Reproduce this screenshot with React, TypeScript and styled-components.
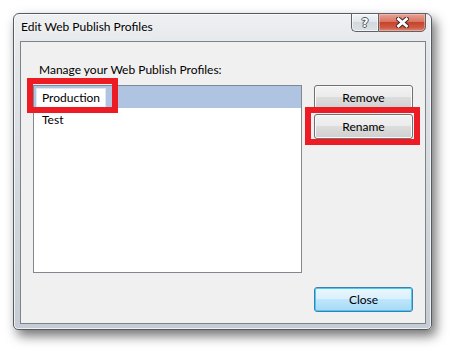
import React from "react";
import styled, { createGlobalStyle, css } from "styled-components";

const Global = createGlobalStyle`
  html, body { margin: 0; padding: 0; background: #ffffff; }
  body {
    font-family: Lato, "Noto Sans", sans-serif;
    font-size: 12px;
    color: #000;
  }
  * { box-sizing: border-box; }
`;

const Page = styled.div`
  position: relative;
  width: 450px;
  height: 351px;
  padding: 13px 0 0 13px;
  overflow: hidden;
`;

const Frame = styled.div`
  width: 419px;
  height: 317px;
  border: 1px solid #555b62;
  border-radius: 6px 6px 5px 5px;
  background: linear-gradient(to bottom, #eef0f2 0%, #e4e7ea 12%, #d2d7dc 60%, #c6ccd3 100%);
  box-shadow: inset 0 0 0 1px rgba(255, 255, 255, 0.7), 4px 6px 12px rgba(0, 0, 0, 0.55);
  display: flex;
  flex-direction: column;
  padding: 0 5px 5px 6px;
`;

const TitleBar = styled.div`
  height: 27px;
  display: flex;
  align-items: flex-start;
  justify-content: space-between;
`;

const Title = styled.div`
  margin-top: 5px;
  padding-left: 1px;
  line-height: 16px;
  color: #000;
  text-shadow: 0 0 6px rgba(255, 255, 255, 0.9);
`;

const CaptionGroup = styled.div`
  display: flex;
  margin-top: -1px;
  height: 19px;
`;

const CaptionButton = styled.div<{ $kind: "help" | "close" }>`
  height: 19px;
  display: flex;
  align-items: center;
  justify-content: center;
  border: 1px solid #5d636b;
  ${(p) =>
    p.$kind === "help"
      ? css`
          width: 27px;
          border-right: none;
          border-radius: 0 0 0 5px;
          background: linear-gradient(to bottom, #f3f5f7 0%, #e3e7eb 45%, #d2d8de 50%, #dce1e6 100%);
          box-shadow: inset 0 0 0 1px rgba(255, 255, 255, 0.6);
        `
      : css`
          width: 48px;
          border-radius: 0 0 5px 0;
          background: linear-gradient(to bottom, #e9a397 0%, #d9745f 45%, #c7432d 50%, #cf5a43 80%, #e08a73 100%);
          box-shadow: inset 0 0 0 1px rgba(255, 210, 200, 0.45);
        `}
`;

const HelpGlyph = styled.span`
  font-family: "DejaVu Sans", sans-serif;
  font-weight: bold;
  font-size: 12px;
  line-height: 12px;
  color: #ffffff;
  text-shadow: 1px 0 0 #4d555e, -1px 0 0 #4d555e, 0 1px 0 #4d555e, 0 -1px 0 #4d555e;
`;

const Client = styled.div`
  flex: 1;
  border: 1px solid #7c838a;
  background: #f0f0f0;
  padding: 12px 12px 11px 12px;
  display: grid;
  grid-template-columns: 269px 99px;
  grid-template-rows: auto auto 1fr;
  column-gap: 12px;
`;

const Label = styled.div`
  grid-column: 1 / span 2;
  margin: 8px 0 7px 6px;
  line-height: 16px;
`;

const ListBox = styled.div`
  height: 188px;
  border: 1px solid #828790;
  background: #ffffff;
  display: flex;
  flex-direction: column;
`;

const SelectedRow = styled.div`
  height: 22px;
  background: #afc4e0;
  padding: 2px 0 0 2px;
  display: flex;
`;

const EditBox = styled.div`
  width: 70px;
  height: 20px;
  background: #ffffff;
  border: 1px solid #dfe7f1;
  padding-left: 5px;
  line-height: 18px;
`;

const Row = styled.div`
  padding: 4px 8px 0 8px;
  line-height: 16px;
`;

const ButtonColumn = styled.div`
  display: flex;
  flex-direction: column;
  gap: 4px;
`;

const Button = styled.div<{ $primary?: boolean }>`
  width: 99px;
  height: 25px;
  border: 1px solid #707070;
  border-radius: 3px;
  display: flex;
  align-items: center;
  justify-content: center;
  line-height: 16px;
  background: linear-gradient(to bottom, #f2f2f2 0%, #ebebeb 50%, #dddddd 50%, #cfcfcf 100%);
  box-shadow: inset 0 0 0 1px #fbfbfb;
  ${(p) =>
    p.$primary &&
    css`
      border-color: #3c7fb1;
      background: linear-gradient(to bottom, #eaf6fd 0%, #d9f0fc 50%, #bee6fd 50%, #a7d9f5 100%);
      box-shadow: inset 0 0 0 1px #48cbf3;
    `}
`;

const Footer = styled.div`
  grid-column: 2;
  align-self: end;
`;

const Annotation = styled.div<{ $x: number; $y: number; $w: number; $h: number }>`
  position: absolute;
  left: ${(p) => p.$x}px;
  top: ${(p) => p.$y}px;
  width: ${(p) => p.$w}px;
  height: ${(p) => p.$h}px;
  border: 6px solid #ed1c24;
`;

export default function App() {
  return (
    <>
      <Global />
      <Page>
        <Frame>
          <TitleBar>
            <Title>Edit Web Publish Profiles</Title>
            <CaptionGroup>
              <CaptionButton $kind="help">
                <HelpGlyph>?</HelpGlyph>
              </CaptionButton>
              <CaptionButton $kind="close">
                <svg width="13" height="11" viewBox="0 0 13 11">
                  <path d="M2.5 2 L10.5 9 M10.5 2 L2.5 9" stroke="#3b2a28" strokeWidth="4.8" strokeLinecap="square" />
                  <path d="M2.5 2 L10.5 9 M10.5 2 L2.5 9" stroke="#ffffff" strokeWidth="2.8" strokeLinecap="square" />
                </svg>
              </CaptionButton>
            </CaptionGroup>
          </TitleBar>
          <Client>
            <Label>Manage your Web Publish Profiles:</Label>
            <ListBox>
              <SelectedRow>
                <EditBox>Production</EditBox>
              </SelectedRow>
              <Row>Test</Row>
            </ListBox>
            <ButtonColumn>
              <Button>Remove</Button>
              <Button>Rename</Button>
            </ButtonColumn>
            <Footer>
              <Button $primary>Close</Button>
            </Footer>
          </Client>
        </Frame>
        <Annotation $x={27} $y={78} $w={91} $h={35} />
        <Annotation $x={305} $y={107} $w={115} $h={38} />
      </Page>
    </>
  );
}
